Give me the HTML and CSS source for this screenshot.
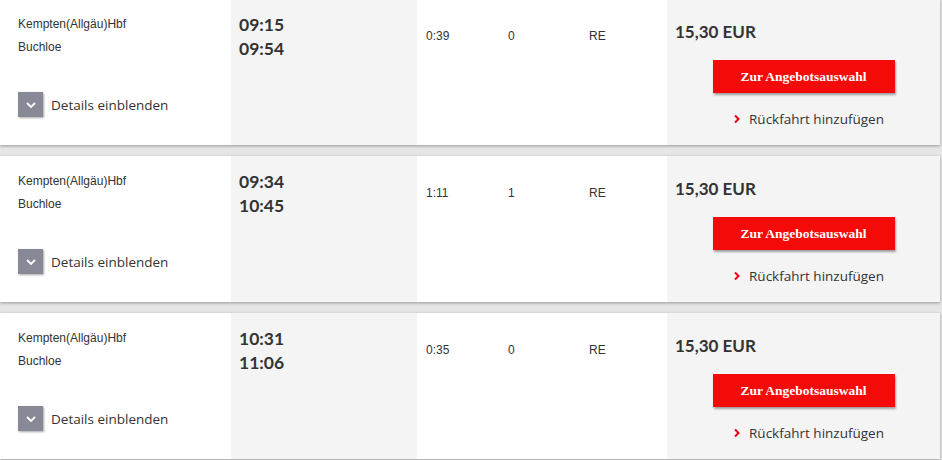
FILE: index.html
```html
<!DOCTYPE html>
<html lang="de">
<head>
<meta charset="utf-8">
<title>Verbindungen</title>
<link rel="stylesheet" href="styles.css">
</head>
<body>
<div class="list">
  <div class="card">
    <div class="c-stations">
      <div class="st">Kempten(Allgäu)Hbf</div>
      <div class="st">Buchloe</div>
      <div class="details"><span class="dbtn"><svg width="10" height="6" viewBox="0 0 10 6"><path d="M1 1 L5 5 L9 1" fill="none" stroke="#fff" stroke-width="1.8"/></svg></span><span>Details einblenden</span></div>
    </div>
    <div class="c-times"><div>09:15</div><div>09:54</div></div>
    <div class="c-info"><span class="dur">0:39</span><span class="chg">0</span><span class="prod">RE</span></div>
    <div class="c-price">
      <div class="price">15,30 EUR</div>
      <button class="offer">Zur Angebotsauswahl</button>
      <div class="ret"><svg width="8" height="10" viewBox="0 0 8 10"><path d="M2 1.5 L5.5 5 L2 8.5" fill="none" stroke="#ec0016" stroke-width="2"/></svg><span>Rückfahrt hinzufügen</span></div>
    </div>
  </div>
  <div class="card">
    <div class="c-stations">
      <div class="st">Kempten(Allgäu)Hbf</div>
      <div class="st">Buchloe</div>
      <div class="details"><span class="dbtn"><svg width="10" height="6" viewBox="0 0 10 6"><path d="M1 1 L5 5 L9 1" fill="none" stroke="#fff" stroke-width="1.8"/></svg></span><span>Details einblenden</span></div>
    </div>
    <div class="c-times"><div>09:34</div><div>10:45</div></div>
    <div class="c-info"><span class="dur">1:11</span><span class="chg">1</span><span class="prod">RE</span></div>
    <div class="c-price">
      <div class="price">15,30 EUR</div>
      <button class="offer">Zur Angebotsauswahl</button>
      <div class="ret"><svg width="8" height="10" viewBox="0 0 8 10"><path d="M2 1.5 L5.5 5 L2 8.5" fill="none" stroke="#ec0016" stroke-width="2"/></svg><span>Rückfahrt hinzufügen</span></div>
    </div>
  </div>
  <div class="card">
    <div class="c-stations">
      <div class="st">Kempten(Allgäu)Hbf</div>
      <div class="st">Buchloe</div>
      <div class="details"><span class="dbtn"><svg width="10" height="6" viewBox="0 0 10 6"><path d="M1 1 L5 5 L9 1" fill="none" stroke="#fff" stroke-width="1.8"/></svg></span><span>Details einblenden</span></div>
    </div>
    <div class="c-times"><div>10:31</div><div>11:06</div></div>
    <div class="c-info"><span class="dur">0:35</span><span class="chg">0</span><span class="prod">RE</span></div>
    <div class="c-price">
      <div class="price">15,30 EUR</div>
      <button class="offer">Zur Angebotsauswahl</button>
      <div class="ret"><svg width="8" height="10" viewBox="0 0 8 10"><path d="M2 1.5 L5.5 5 L2 8.5" fill="none" stroke="#ec0016" stroke-width="2"/></svg><span>Rückfahrt hinzufügen</span></div>
    </div>
  </div>
</div>
</body>
</html>
```

FILE: styles.css
```css
html, body {
  margin: 0;
  padding: 0;
}
body {
  background: #e6e6e6;
  font-family: "Liberation Sans", Arial, sans-serif;
  color: #333;
  width: 942px;
  height: 460px;
  overflow: hidden;
}
.list {
  display: flex;
  flex-direction: column;
  gap: 11px;
  margin-top: -1px;
  width: 940px;
}
.card {
  display: grid;
  grid-template-columns: 231px 186px 250px 273px;
  height: 146px;
  background: #fff;
  box-shadow: 0 1px 3px rgba(0, 0, 0, 0.35);
}
.c-stations {
  padding: 15px 0 0 18px;
  font-size: 12px;
}
.st {
  height: 23px;
  line-height: 20px;
}
.details {
  display: flex;
  align-items: center;
  gap: 8px;
  margin-top: 32px;
  font-family: "Open Sans", sans-serif;
  font-size: 13.5px;
  color: #333;
}
.dbtn {
  width: 25px;
  height: 25px;
  background: #878a96;
  box-shadow: 1px 1px 2px rgba(0, 0, 0, 0.35);
  display: flex;
  align-items: center;
  justify-content: center;
}
.c-times {
  background: #f4f4f4;
  padding: 14px 0 0 8px;
  font-family: Lato, sans-serif;
  font-weight: 700;
  font-size: 17.5px;
  line-height: 24px;
  color: #333;
}
.c-info {
  font-size: 12px;
  padding-top: 30px;
  display: flex;
}
.dur { width: 82px; padding-left: 9px; }
.chg { width: 81px; }
.c-price {
  background: #f4f4f4;
  display: flex;
  flex-direction: column;
  align-items: center;
  padding-top: 22px;
}
.price {
  align-self: flex-start;
  padding-left: 8px;
  font-family: Lato, sans-serif;
  font-weight: 700;
  font-size: 17px;
  line-height: 22px;
  color: #333;
}
.offer {
  margin-top: 17px;
  width: 182px;
  height: 33px;
  border: 0;
  background: #f50a0a;
  color: #fff;
  font-family: "Liberation Serif", "Times New Roman", serif;
  font-weight: 700;
  font-size: 13.5px;
  box-shadow: 1px 2px 2px rgba(0, 0, 0, 0.35);
  padding: 0;
}
.ret {
  margin-top: 17px;
  margin-left: 10px;
  display: flex;
  align-items: center;
  gap: 8px;
  font-family: "Open Sans", sans-serif;
  font-size: 13.5px;
  color: #333;
}
```
